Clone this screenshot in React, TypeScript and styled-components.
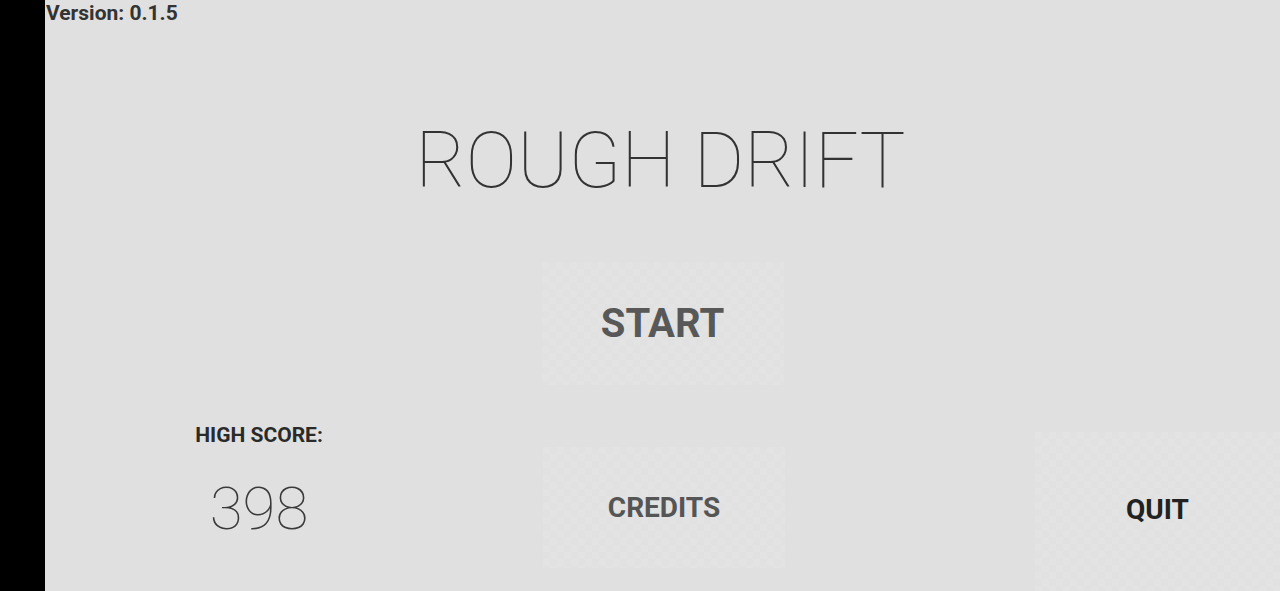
import React from "react";
import styled, { createGlobalStyle } from "styled-components";

const GlobalStyle = createGlobalStyle`
  html, body {
    margin: 0;
    padding: 0;
    width: 1280px;
    height: 591px;
    overflow: hidden;
    background: #000;
  }
  #root {
    width: 1280px;
    height: 591px;
  }
  * { box-sizing: border-box; }
`;

const Screen = styled.div`
  display: flex;
  width: 1280px;
  height: 591px;
  font-family: Roboto, "Liberation Sans", sans-serif;
`;

const SideBar = styled.div`
  width: 45px;
  flex: none;
  background: #000;
`;

const Main = styled.main`
  flex: 1;
  display: flex;
  flex-direction: column;
  background: #dfe0df;
`;

const Version = styled.div`
  font-size: 21px;
  font-weight: 700;
  line-height: 26px;
  color: #333;
  padding-left: 1px;
`;

const Title = styled.h1`
  margin: 97px 0 0;
  padding-right: 4px;
  font-size: 77px;
  font-weight: 100;
  line-height: 1;
  color: #333;
  text-align: center;
`;

const Panel = styled.button<{ $w: number; $h: number; $size: number; $color: string; $shift?: number }>`
  width: ${(p) => p.$w}px;
  height: ${(p) => p.$h}px;
  border: none;
  padding: 0 0 ${(p) => p.$shift ?? 0}px;
  display: flex;
  align-items: center;
  justify-content: center;
  font-family: Roboto, "Liberation Sans", sans-serif;
  font-weight: 700;
  font-size: ${(p) => p.$size}px;
  color: ${(p) => p.$color};
  background-color: #e1e2e1;
  background-image: repeating-conic-gradient(#e0e1e0 0 25%, #e2e3e2 0 50%);
  background-size: 14px 14px;
  cursor: pointer;
`;

const StartRow = styled.div`
  display: flex;
  justify-content: center;
  margin-top: 62px;
`;

const BottomRow = styled.div`
  flex: 1;
  display: grid;
  grid-template-columns: 428fr 70fr 242fr 250fr 245fr;
  align-items: start;
`;

const ScoreBlock = styled.div`
  grid-column: 1;
  display: flex;
  flex-direction: column;
  align-items: center;
  margin-top: 40px;
`;

const ScoreLabel = styled.div`
  font-size: 21px;
  font-weight: 700;
  line-height: 21px;
  color: #2a2a2a;
`;

const ScoreValue = styled.div`
  margin-top: 33px;
  font-size: 60px;
  font-weight: 100;
  line-height: 60px;
  color: #3a3a3a;
`;

const Cell = styled.div<{ $col: number; $top: number }>`
  grid-column: ${(p) => p.$col};
  margin-top: ${(p) => p.$top}px;
  display: flex;
  justify-content: center;
`;

export default function App() {
  return (
    <>
      <GlobalStyle />
      <Screen>
        <SideBar />
        <Main>
          <Version>Version: 0.1.5</Version>
          <Title>ROUGH DRIFT</Title>
          <StartRow>
            <Panel $w={242} $h={123} $size={40} $color="#585858">START</Panel>
          </StartRow>
          <BottomRow>
            <ScoreBlock>
              <ScoreLabel>HIGH SCORE:</ScoreLabel>
              <ScoreValue>398</ScoreValue>
            </ScoreBlock>
            <Cell $col={3} $top={62}>
              <Panel $w={242} $h={121} $size={28} $color="#555555">CREDITS</Panel>
            </Cell>
            <Cell $col={5} $top={47}>
              <Panel $w={245} $h={159} $size={28} $color="#222222" $shift={5}>QUIT</Panel>
            </Cell>
          </BottomRow>
        </Main>
      </Screen>
    </>
  );
}
